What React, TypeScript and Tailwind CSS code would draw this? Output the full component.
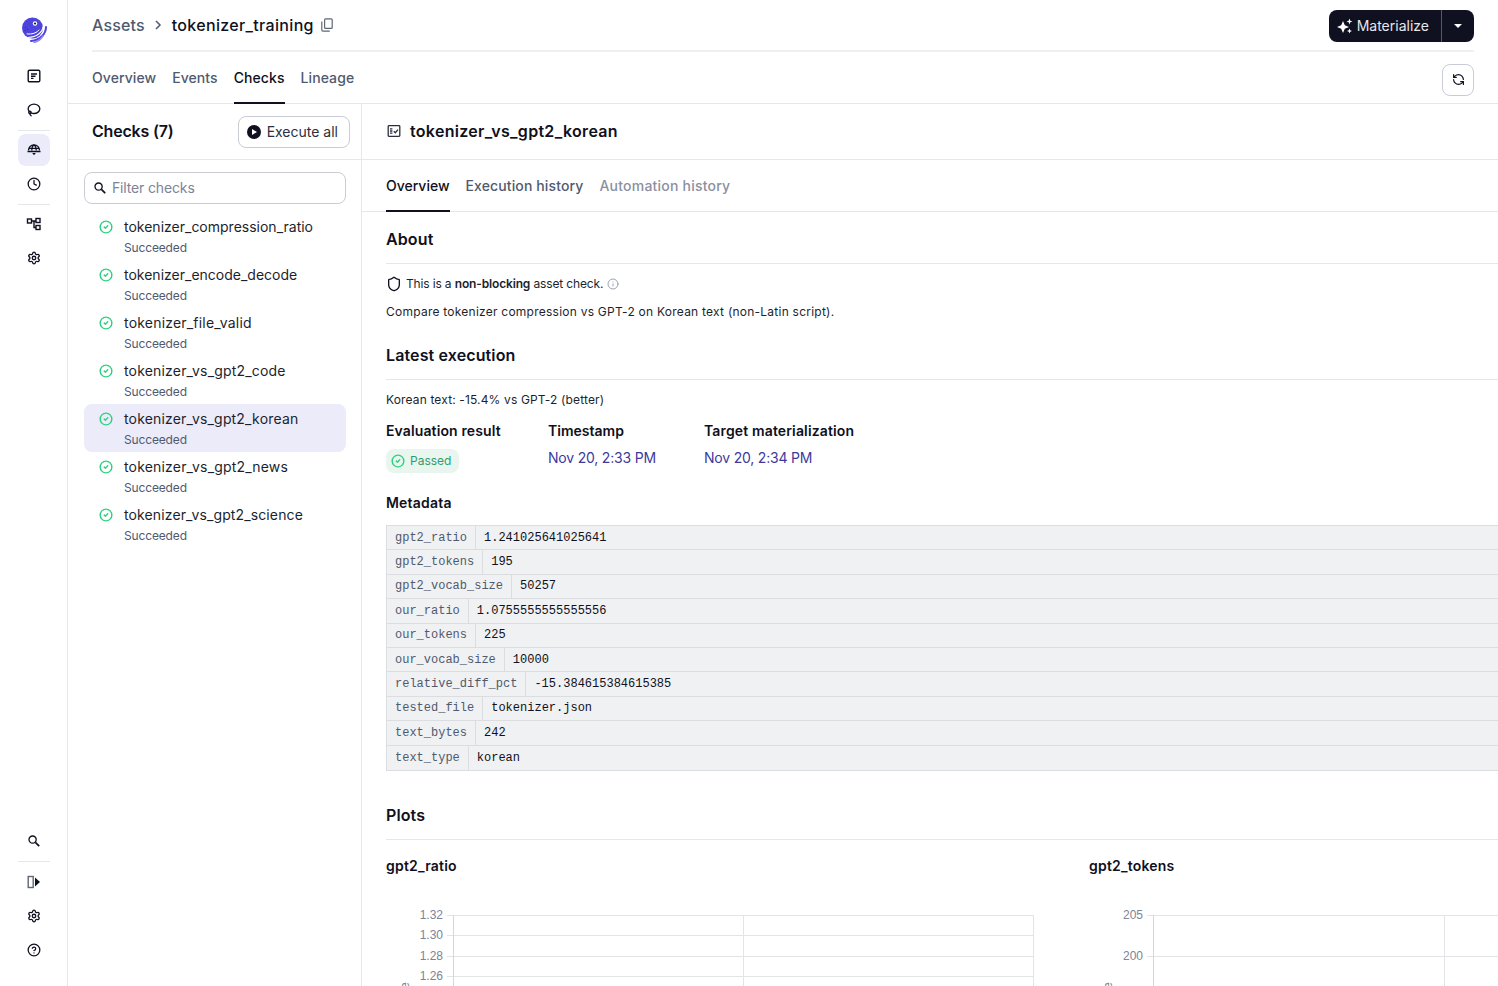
import { CircleCheck, CircleHelp, Clock, Info, Lasso, RefreshCw, Settings, Shield } from "lucide-react";

const checks = [
    { name: "tokenizer_compression_ratio", spacing: "tracking-[0px]" },
    { name: "tokenizer_encode_decode", spacing: "tracking-[0px]" },
    { name: "tokenizer_file_valid", spacing: "tracking-[0.2px]" },
    { name: "tokenizer_vs_gpt2_code", spacing: "tracking-[0.18px]" },
    { name: "tokenizer_vs_gpt2_korean", spacing: "tracking-[0.17px]" },
    { name: "tokenizer_vs_gpt2_news", spacing: "tracking-[0.18px]" },
    { name: "tokenizer_vs_gpt2_science", spacing: "tracking-[0.12px]" },
];

const metadata = [
    ["gpt2_ratio", "1.241025641025641"],
    ["gpt2_tokens", "195"],
    ["gpt2_vocab_size", "50257"],
    ["our_ratio", "1.0755555555555556"],
    ["our_tokens", "225"],
    ["our_vocab_size", "10000"],
    ["relative_diff_pct", "-15.384615384615385"],
    ["tested_file", "tokenizer.json"],
    ["text_bytes", "242"],
    ["text_type", "korean"],
];

function Logo() {
    return (
        <svg width="26" height="26" viewBox="0 0 26 26" fill="none">
            <circle cx="11.5" cy="11" r="10.5" fill="#4f43dd" />
            <path d="M25 10C25 17 19 23 10 24" stroke="#4f43dd" strokeWidth="2" strokeLinecap="round" />
            <path d="M22 19C20 22 17 24.5 13 25.5" stroke="#8f88ea" strokeWidth="1.5" strokeLinecap="round" />
            <path d="M22 10C21.5 15 16 20 7 20.5" stroke="#fff" strokeWidth="1.2" strokeLinecap="round" />
            <path d="M18 13C16 16 11 17.5 6 17" stroke="#fff" strokeWidth="1" strokeLinecap="round" />
            <circle cx="14" cy="6.5" r="2.2" fill="#fff" />
            <circle cx="14" cy="6.5" r="1.1" fill="#16163f" />
            <circle cx="4.5" cy="10.5" r="0.6" fill="#2c2596" />
            <circle cx="6.5" cy="12.5" r="0.6" fill="#2c2596" />
            <circle cx="4" cy="13.5" r="0.6" fill="#2c2596" />
        </svg>
    );
}

function OverviewIcon() {
    return (
        <svg width="14" height="14" viewBox="0 0 14 14" fill="none" stroke="#0f1020" strokeWidth="1.4">
            <rect x="1.2" y="1.2" width="11.6" height="11.6" rx="1.4" />
            <path d="M4 5H10M4 7.2H8.5M4 9.4H6.5" />
        </svg>
    );
}

function CatalogIcon() {
    return (
        <svg width="16" height="16" viewBox="0 0 16 16" fill="none" stroke="#0f1020" strokeWidth="1.3">
            <path d="M2.5 8.5C2.5 5.2 5 3 8 3C11 3 13.5 5.2 13.5 8.5" />
            <path d="M5.8 8.5C5.8 5.5 6.8 3.6 8 3C9.2 3.6 10.2 5.5 10.2 8.5M3 6.4H13" />
            <path d="M1.5 9.5H14.5" strokeWidth="1.5" />
            <path d="M6.2 11H9.8L8 13.2Z" fill="#0f1020" stroke="none" />
        </svg>
    );
}

function DeploymentIcon() {
    return (
        <svg width="16" height="16" viewBox="0 0 16 16" fill="none" stroke="#0f1020" strokeWidth="1.4">
            <rect x="1.5" y="3" width="4" height="4" />
            <rect x="10" y="2.5" width="4" height="4" />
            <rect x="10" y="9.5" width="4" height="4" />
            <path d="M5.5 5H10M8 5V11.5H10" />
        </svg>
    );
}

function CollapseIcon() {
    return (
        <svg width="14" height="14" viewBox="0 0 14 14">
            <rect x="1.2" y="1.5" width="5" height="11" fill="none" stroke="#5f6675" strokeWidth="1.4" />
            <path d="M8 2.5L13 7L8 11.5Z" fill="#0f1020" />
        </svg>
    );
}

function Sparkles() {
    return (
        <svg width="16" height="16" viewBox="0 0 16 16" fill="#fff">
            <path d="M6 3L7.8 7.2L12 9L7.8 10.8L6 15L4.2 10.8L0 9L4.2 7.2Z" />
            <path d="M12.5 0.5L13.3 2.7L15.5 3.5L13.3 4.3L12.5 6.5L11.7 4.3L9.5 3.5L11.7 2.7Z" />
            <path d="M12.5 10.5L13.2 12.3L15 13L13.2 13.7L12.5 15.5L11.8 13.7L10 13L11.8 12.3Z" />
        </svg>
    );
}

function CheckTableIcon() {
    return (
        <svg width="16" height="16" viewBox="0 0 16 16" fill="none" stroke="#2b2f3d" strokeWidth="1.3">
            <rect x="2.2" y="2.7" width="11.6" height="10.6" rx="0.8" />
            <path d="M4 5.9H6.4M4 8H6.4M4 10.1H6.4M7.8 8.2L9.3 9.7L12 6.6" />
        </svg>
    );
}

function SearchGlyph() {
    return (
        <svg width="12" height="12" viewBox="0 0 12 12" fill="none" stroke="#0f1020">
            <circle cx="4.6" cy="4.6" r="3.6" strokeWidth="1.3" />
            <path d="M7.4 7.4L11.2 11.2" strokeWidth="1.7" />
        </svg>
    );
}

function CopyGlyph() {
    return (
        <svg width="12" height="14" viewBox="0 0 12 14" fill="none" stroke="#5f6675" strokeWidth="1.2">
            <rect x="3.6" y="0.8" width="7.6" height="9.6" rx="1" />
            <path d="M0.8 3.6V12C0.8 12.7 1.3 13.2 2 13.2H8.8" />
        </svg>
    );
}

function Chart({ ticks, axisX, midX, rightX }: { ticks: [string, number][]; axisX: number; midX: number; rightX: number }) {
    return (
        <svg width="680" height="110" viewBox="0 0 680 110" className="block">
            {ticks.map(([label, y]) => (
                <g key={label}>
                    <path d={`M${axisX - 6} ${y + 0.5}H${rightX}`} stroke="#e3e4e7" />
                    <text x={axisX - 10} y={y + 4} textAnchor="end" fontSize="12" fill="#7d8497" fontFamily="Liberation Sans, sans-serif">{label}</text>
                </g>
            ))}
            <path d={`M${axisX + 0.5} 39V110`} stroke="#d5d6da" />
            <path d={`M${midX + 0.5} 39V110`} stroke="#e3e4e7" />
            <path d={`M${rightX + 0.5} 39V110`} stroke="#e3e4e7" />
            <text x={19} y={113} fontSize="12" fill="#7d8497" fontFamily="Liberation Sans, sans-serif" transform="rotate(-90 19 113)" dy="4">e</text>
        </svg>
    );
}

function SectionHeading({ children }: { children: React.ReactNode }) {
    return <h2 className="flex h-[52px] items-end border-b border-[#e6e7ea] pb-3 text-base leading-6 font-semibold tracking-[0.12px] text-[#0f1020]">{children}</h2>;
}

function NavButton({ children, active }: { children: React.ReactNode; active?: boolean }) {
    return (
        <div className={`flex h-8 w-8 items-center justify-center rounded-lg ${active ? "bg-[#ecebfa]" : ""}`}>
            {children}
        </div>
    );
}

export default function App() {
    return (
        <div className="flex h-[986px] w-[1498px] overflow-hidden bg-white font-['Inter',sans-serif] text-[#0f1020]">
            <aside className="flex w-[68px] shrink-0 flex-col items-center border-r border-[#e6e7ea] pt-[17px] pb-5">
                <Logo />
                <div className="mt-[17px] flex flex-col items-center gap-[2px]">
                    <NavButton><OverviewIcon /></NavButton>
                    <NavButton><Lasso size={14} strokeWidth={2.3} /></NavButton>
                    <div className="my-[1.5px] h-px w-8 bg-[#e6e7ea]" />
                    <NavButton active><CatalogIcon /></NavButton>
                    <NavButton><Clock size={14} strokeWidth={2.2} /></NavButton>
                    <div className="my-[1.5px] h-px w-8 bg-[#e6e7ea]" />
                    <NavButton><DeploymentIcon /></NavButton>
                    <NavButton><Settings size={14} strokeWidth={2.2} /></NavButton>
                </div>
                <div className="mt-auto flex flex-col items-center gap-[2px]">
                    <NavButton><SearchGlyph /></NavButton>
                    <div className="my-[2px] h-px w-8 bg-[#e6e7ea]" />
                    <NavButton><CollapseIcon /></NavButton>
                    <NavButton><Settings size={14} strokeWidth={2.2} /></NavButton>
                    <NavButton><CircleHelp size={14} strokeWidth={2.2} /></NavButton>
                </div>
            </aside>

            <main className="flex min-w-0 flex-1 flex-col">
                <div className="mx-6 flex h-[52px] shrink-0 items-center justify-between border-b-2 border-[#eeeff1]">
                    <div className="flex items-center text-base font-medium">
                        <span className="tracking-[0.15px] text-[#4f5a6f]">Assets</span>
                        <svg width="10" height="10" viewBox="0 0 10 10" fill="none" stroke="#4f5a6f" strokeWidth="1.5" className="ml-[8px]">
                            <path d="M3 1L7 5L3 9" />
                        </svg>
                        <span className="ml-[9px] tracking-[0.33px]">tokenizer_training</span>
                        <div className="ml-[7px]"><CopyGlyph /></div>
                    </div>
                    <div className="mt-[2px] flex h-8 items-center rounded-lg bg-[#0f1020] text-sm text-[#e6e7ea]">
                        <div className="flex items-center gap-[4px] pr-3 pl-[8px]">
                            <Sparkles />
                            Materialize
                        </div>
                        <div className="flex h-8 w-[33px] items-center justify-center border-l border-[#55586a]">
                            <div className="h-0 w-0 border-x-[4px] border-t-[4px] border-x-transparent border-t-white" />
                        </div>
                    </div>
                </div>

                <div className="flex h-[52px] shrink-0 items-center justify-between border-b border-[#e6e7ea] px-6">
                    <div className="flex h-full gap-4 text-sm font-medium tracking-[0.08px] text-[#4f5a6f]">
                        <span className="flex items-center">Overview</span>
                        <span className="flex items-center">Events</span>
                        <span className="-mb-px flex items-center border-b-2 border-[#0f1020] pt-[2px] text-[#0f1020]">Checks</span>
                        <span className="flex items-center">Lineage</span>
                    </div>
                    <div className="mt-[4px] flex h-8 w-8 items-center justify-center rounded-lg border border-[#c9ccd4]">
                        <RefreshCw size={13} strokeWidth={2.2} className="-scale-x-100" />
                    </div>
                </div>

                <div className="flex min-h-0 flex-1">
                    <section className="w-[294px] shrink-0 border-r border-[#e6e7ea]">
                        <div className="flex h-[56px] items-center justify-between border-b border-[#e6e7ea] pr-[11px] pl-6">
                            <h2 className="pb-[2px] text-base font-semibold tracking-[-0.2px]">Checks (7)</h2>
                            <div className="flex h-8 items-center gap-[6px] rounded-lg border border-[#c9ccd4] pr-[11px] pl-2 text-sm text-[#2b2f3d]">
                                <div className="flex h-[14px] w-[14px] items-center justify-center rounded-full bg-[#0f1020]">
                                    <div className="ml-[1px] h-0 w-0 border-y-[3.5px] border-l-[5px] border-y-transparent border-l-white" />
                                </div>
                                Execute all
                            </div>
                        </div>
                        <div className="pt-3 pr-[15px] pl-4">
                            <div className="flex h-8 items-center gap-[6px] rounded-lg border border-[#c9ccd4] px-[9px] text-sm tracking-[-0.15px] text-[#7d8497]">
                                <SearchGlyph />
                                Filter checks
                            </div>
                            <div className="mt-2">
                                {checks.map(({ name, spacing }) => (
                                    <div key={name} className={`flex h-12 gap-[11px] rounded-lg pt-[6px] pl-[15px] ${name === "tokenizer_vs_gpt2_korean" ? "bg-[#ecebfa]" : ""}`}>
                                        <CircleCheck size={14} strokeWidth={2.4} className="mt-[2px] text-[#2fd07f]" />
                                        <div>
                                            <div className={`text-sm leading-[18px] text-[#1c1f2e] ${spacing}`}>{name}</div>
                                            <div className="mt-[4px] text-xs leading-4 tracking-[-0.15px] text-[#4f5a6f]">Succeeded</div>
                                        </div>
                                    </div>
                                ))}
                            </div>
                        </div>
                    </section>

                    <section className="min-w-0 flex-1 overflow-hidden">
                        <div className="flex h-[56px] items-center gap-[8px] border-b border-[#e6e7ea] px-6 pb-[1px]">
                            <CheckTableIcon />
                            <h1 className="text-base font-semibold tracking-[0.3px]">tokenizer_vs_gpt2_korean</h1>
                        </div>
                        <div className="flex h-[52px] gap-4 border-b border-[#e6e7ea] px-6 text-sm font-medium text-[#4f5a6f]">
                            <span className="-mb-px flex items-center border-b-2 border-[#0f1020] pt-[2px] text-[#0f1020]">Overview</span>
                            <span className="flex items-center tracking-[0.12px]">Execution history</span>
                            <span className="flex items-center tracking-[0.22px] text-[#8a90a1]">Automation history</span>
                        </div>

                        <div className="w-[1300px] pl-6">
                            <SectionHeading>About</SectionHeading>
                            <div className="mt-[10px] flex h-5 items-center gap-[4px] text-xs tracking-[-0.15px] text-[#1c1f2e]">
                                <Shield size={16} strokeWidth={2} className="text-[#0f1020]" />
                                <span>This is a <strong className="font-semibold">non-blocking</strong> asset check.</span>
                                <Info size={12} strokeWidth={1.5} className="text-[#7d8497]" />
                            </div>
                            <p className="mt-[8px] text-xs leading-5 tracking-[0.24px] text-[#1c1f2e]">Compare tokenizer compression vs GPT-2 on Korean text (non-Latin script).</p>

                            <div className="mt-[6px]">
                                <SectionHeading>Latest execution</SectionHeading>
                            </div>
                            <p className="mt-[10px] text-xs leading-5 tracking-[0.14px] text-[#1c1f2e]">Korean text: -15.4% vs GPT-2 (better)</p>

                            <div className="mt-[11px] flex">
                                <div className="w-[162px]">
                                    <div className="text-sm leading-5 font-semibold tracking-[0.12px]">Evaluation result</div>
                                    <div className="mt-[8px] flex h-6 w-[73px] items-center gap-[5px] rounded-lg bg-[#e8f6ef] pl-[5px] text-xs text-[#2f9e6e]">
                                        <CircleCheck size={14} strokeWidth={2.4} className="text-[#2fd07f]" />
                                        Passed
                                    </div>
                                </div>
                                <div className="w-[156px]">
                                    <div className="text-sm leading-5 font-semibold">Timestamp</div>
                                    <div className="mt-[7px] text-sm leading-5 tracking-[-0.2px] text-[#3d3a9b]">Nov 20, 2:33 PM</div>
                                </div>
                                <div>
                                    <div className="text-sm leading-5 font-semibold tracking-[0.14px]">Target materialization</div>
                                    <div className="mt-[7px] text-sm leading-5 tracking-[-0.2px] text-[#3d3a9b]">Nov 20, 2:34 PM</div>
                                </div>
                            </div>

                            <div className="mt-5 text-sm leading-5 font-semibold tracking-[0.2px]">Metadata</div>
                            <div className="mt-3 border border-[#dcdde1] bg-[#f0f1f3] font-['Liberation_Mono',monospace] text-xs">
                                {metadata.map(([key, value]) => (
                                    <div key={key} className="flex h-[24.4px] border-b border-[#dcdde1] last:border-b-0">
                                        <div className="flex items-center border-r border-[#dcdde1] px-2 whitespace-nowrap text-[#4f5a6f]">{key}</div>
                                        <div className="flex items-center px-2 text-[#0f1020]">{value}</div>
                                    </div>
                                ))}
                            </div>

                            <div className="mt-[17px]">
                                <SectionHeading>Plots</SectionHeading>
                            </div>
                            <div className="mt-4 grid grid-cols-[703px_1fr]">
                                <div>
                                    <div className="text-sm leading-5 font-semibold tracking-[0.2px]">gpt2_ratio</div>
                                    <Chart ticks={[["1.32", 39], ["1.30", 59], ["1.28", 80], ["1.26", 100]]} axisX={67} midX={357} rightX={647} />
                                </div>
                                <div>
                                    <div className="text-sm leading-5 font-semibold tracking-[0.2px]">gpt2_tokens</div>
                                    <Chart ticks={[["205", 39], ["200", 80]]} axisX={64} midX={355} rightX={680} />
                                </div>
                            </div>
                        </div>
                    </section>
                </div>
            </main>
        </div>
    );
}
